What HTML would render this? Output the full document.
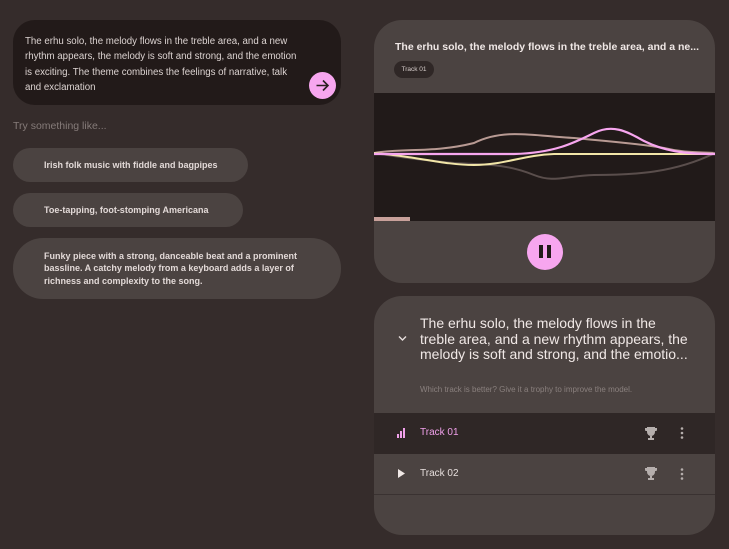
<!DOCTYPE html>
<html><head><style>
*{margin:0;padding:0;box-sizing:border-box}
body{width:729px;height:549px;background:#352c2b;font-family:"Liberation Sans",sans-serif;color:#e6dedc;position:relative;overflow:hidden}
.a{position:absolute}
.prompt{left:13px;top:20px;width:328px;height:85px;background:#221a19;border-radius:22px;padding:14px 0 0 12px;font-size:9.7px;line-height:15.3px;color:#ddd4d2}
.send{left:309px;top:72px;width:27px;height:27px;border-radius:50%;background:#f7a6ef}
.try{left:13px;top:120px;font-size:10.5px;color:#857b79}
.chip{left:13px;background:#4b4341;font-size:9px;font-weight:bold;color:#e2d9d7;padding-left:31px;display:flex;align-items:center;line-height:12.5px}
.card{left:374px;width:341px;background:#4b4341;border-radius:28px;overflow:hidden}
</style></head><body>
<div class="a prompt"><div style="width:279px">The erhu solo, the melody flows in the treble area, and a new rhythm appears, the melody is soft and strong, and the emotion is exciting. The theme combines the feelings of narrative, talk and exclamation</div></div>
<div class="a send"><svg width="27" height="27" viewBox="0 0 27 27"><path d="M7.5 13.5h11M14 8.5l5 5-5 5" stroke="#2a2120" stroke-width="1.6" fill="none"/></svg></div>
<div class="a try">Try something like...</div>
<div class="a chip" style="top:148px;width:235px;height:34px;border-radius:17px">Irish folk music with fiddle and bagpipes</div>
<div class="a chip" style="top:193px;width:230px;height:34px;border-radius:17px">Toe-tapping, foot-stomping Americana</div>
<div class="a chip" style="top:238px;width:328px;height:61px;border-radius:30px;padding-right:20px">Funky piece with a strong, danceable beat and a prominent bassline. A catchy melody from a keyboard adds a layer of richness and complexity to the song.</div>

<div class="a card" style="top:20px;height:263px">
 <div class="a" style="left:21px;top:21px;font-size:10.5px;font-weight:bold;color:#f0e8e6;white-space:nowrap">The erhu solo, the melody flows in the treble area, and a ne...</div>
 <div class="a" style="left:20px;top:41px;width:40px;height:17px;border-radius:9px;background:#2f2726;font-size:6.5px;line-height:17px;text-align:center;color:#d8cfcd">Track 01</div>
 <div class="a" style="left:0;top:73px;width:341px;height:128px;background:#211a19">
  <svg width="341" height="128" viewBox="0 0 341 128">
   <path d="M0 60 C30 55 60 60 100 50 C130 35 160 43 200 45 C230 48 260 50 290 55 C310 60 325 59 341 60" stroke="#b89a93" stroke-width="2" fill="none"/>
   <path d="M0 60 C30 65 50 67 80 70 C110 72 130 70 160 82 C180 90 190 83 220 82 C260 82 300 80 341 60" stroke="#5a4e4c" stroke-width="2" fill="none"/>
   <path d="M0 60 C40 63 70 72 100 72 C130 72 150 62 180 61 L341 61" stroke="#f2e6a8" stroke-width="2" fill="none"/>
   <path d="M0 61 L140 61 C180 60 200 50 220 40 C240 30 255 40 270 48 C290 58 310 61 341 61" stroke="#f7a6ef" stroke-width="2.2" fill="none"/>
   <rect x="0" y="124" width="36" height="4" fill="#c8a09a"/>
  </svg>
 </div>
 <div class="a" style="left:153px;top:214px;width:36px;height:36px;border-radius:50%;background:#f7a6ef"><div class="a" style="left:12px;top:11px;width:4px;height:13px;background:#221a19"></div><div class="a" style="left:20px;top:11px;width:4px;height:13px;background:#221a19"></div></div>
</div>

<div class="a card" style="top:296px;height:239px">
 <svg class="a" style="left:24px;top:39px" width="9" height="7" viewBox="0 0 9 7"><path d="M1 1.5l3.5 3.5 3.5-3.5" stroke="#e6dedc" stroke-width="1.4" fill="none"/></svg>
 <div class="a" style="left:46px;top:20px;width:274px;font-size:14px;line-height:15.5px;color:#f0e8e6">The erhu solo, the melody flows in the treble area, and a new rhythm appears, the melody is soft and strong, and the emotio...</div>
 <div class="a" style="left:46px;top:89px;font-size:8px;color:#8a807e">Which track is better? Give it a trophy to improve the model.</div>
 <div class="a" style="left:0;top:117px;width:341px;height:41px;background:#2f2726"></div>
 <div class="a" style="left:0;top:198px;width:341px;height:1px;background:#3a3231"></div>
 <svg class="a" style="left:23px;top:132px" width="10" height="10" viewBox="0 0 10 10"><rect x="0" y="6" width="2" height="4" fill="#f0a0ea"/><rect x="3" y="3" width="2" height="7" fill="#f0a0ea"/><rect x="6" y="0" width="2" height="10" fill="#f0a0ea"/></svg>
 <div class="a" style="left:46px;top:131px;font-size:10px;color:#f0a0ea">Track 01</div>
 <svg class="a" style="left:24px;top:173px" width="8" height="9" viewBox="0 0 8 9"><path d="M0 0L7 4.5 0 9z" fill="#f0e8e6"/></svg>
 <div class="a" style="left:46px;top:172px;font-size:10px;color:#e6dedc">Track 02</div>
 <svg class="a" style="left:270px;top:130px" width="14" height="14" viewBox="0 0 14 14"><path d="M3 1h8v5a4 4 0 0 1-8 0z M1 2h2v3H2a1 1 0 0 1-1-1z M11 2h2v2a1 1 0 0 1-1 1h-1z M6 10h2v2h2v2H4v-2h2z" fill="#b5aeac"/></svg>
 <svg class="a" style="left:270px;top:170px" width="14" height="14" viewBox="0 0 14 14"><path d="M3 1h8v5a4 4 0 0 1-8 0z M1 2h2v3H2a1 1 0 0 1-1-1z M11 2h2v2a1 1 0 0 1-1 1h-1z M6 10h2v2h2v2H4v-2h2z" fill="#b5aeac"/></svg>
 <svg class="a" style="left:306px;top:131px" width="4" height="12" viewBox="0 0 4 12"><circle cx="2" cy="1.5" r="1.3" fill="#b5aeac"/><circle cx="2" cy="6" r="1.3" fill="#b5aeac"/><circle cx="2" cy="10.5" r="1.3" fill="#b5aeac"/></svg>
 <svg class="a" style="left:306px;top:172px" width="4" height="12" viewBox="0 0 4 12"><circle cx="2" cy="1.5" r="1.3" fill="#b5aeac"/><circle cx="2" cy="6" r="1.3" fill="#b5aeac"/><circle cx="2" cy="10.5" r="1.3" fill="#b5aeac"/></svg>
</div>
</body></html>
